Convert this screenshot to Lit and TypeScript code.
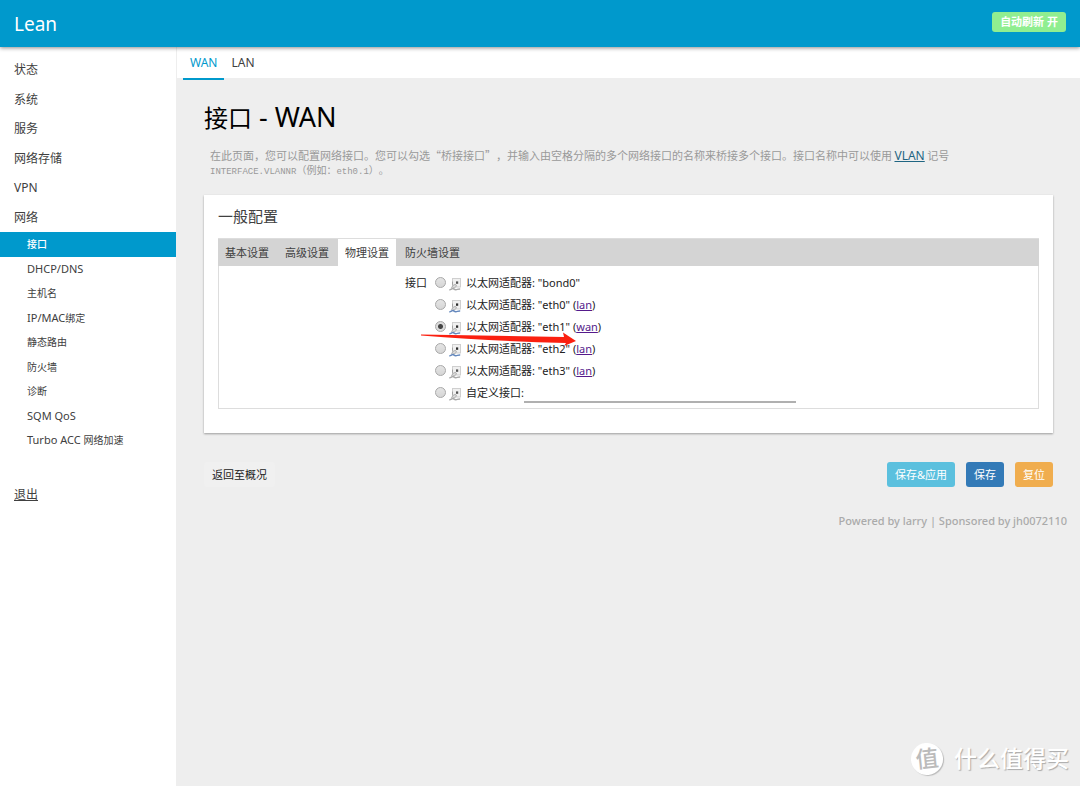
import { LitElement, html, svg, css, nothing } from "lit";
import { customElement, property, state } from "lit/decorators.js";

interface Device {
  id: string;
  label: string;
  net?: string;
  up: boolean;
}

const MENU = ["状态", "系统", "服务", "网络存储", "VPN", "网络"];
const SUBMENU = ["接口", "DHCP/DNS", "主机名", "IP/MAC绑定", "静态路由", "防火墙", "诊断", "SQM QoS", "Turbo ACC 网络加速"];
const TABS = ["基本设置", "高级设置", "物理设置", "防火墙设置"];
const DEVICES: Device[] = [
  { id: "bond0", label: '以太网适配器: "bond0"', up: false },
  { id: "eth0", label: '以太网适配器: "eth0"', net: "lan", up: true },
  { id: "eth1", label: '以太网适配器: "eth1"', net: "wan", up: true },
  { id: "eth2", label: '以太网适配器: "eth2"', net: "lan", up: true },
  { id: "eth3", label: '以太网适配器: "eth3"', net: "lan", up: false },
];

/** Wraps each Latin run so that it can be set slightly larger than the Chinese text. */
const mixed = (text: string) =>
  text.split(/([\x20-\x7e]+)/).filter(Boolean).map((run) =>
    /^[\x20-\x7e]/.test(run) ? html`<span class="latin">${run}</span>` : run);

@customElement("port-icon")
class PortIcon extends LitElement {
  @property({ type: Boolean }) up = false;

  static styles = css`
    :host { display: block; width: 13px; height: 13px; }
    svg { display: block; }
  `;

  render() {
    const cable = this.up ? "#6488bd" : "#a9a9a9";
    return html`<svg width="13" height="13" viewBox="0 0 13 13" aria-hidden="true">
      ${svg`
        <rect x="3.5" y=".5" width="8" height="8.5" fill="#f0f0f0" stroke="#cfcfcf"/>
        <rect x="7" y="3.4" width="2.2" height="2.4" fill="${this.up ? "#2c2c2c" : "#555"}"/>
        <path d="M3.5 3.6v3.2" fill="none" stroke="#a2a2a2"/>
        <path d="M2.6 9.4 4.4 7l2.2-.6.9 1.7-1.9 1.6-2.2.6z" fill="#dcdcdc" stroke="#979797" stroke-width=".7"/>
        <path d="M.3 11.7c1.7.3 2.2-1.3 3.6-1.2 1.3.1 1.2 1.4 3 1.2 1.4-.1 2-.8 4.3-.7" fill="none" stroke="${cable}" stroke-width="1.5"/>
      `}
    </svg>`;
  }
}

@customElement("app-root")
class AppRoot extends LitElement {
  @state() private selected = "eth1";

  static styles = css`
    :host {
      display: flex;
      flex-direction: column;
      min-height: 100vh;
      position: relative;
      background: #eee;
      color: #404040;
      font: 11px/16px "Noto Sans", "Noto Sans CJK SC", sans-serif;
    }
    * { box-sizing: border-box; }
    a { color: inherit; text-decoration: none; }
    ul { list-style: none; margin: 0; padding: 0; }
    button { font: inherit; border: 0; cursor: pointer; }

    .top {
      display: flex;
      align-items: center;
      justify-content: space-between;
      height: 47px;
      padding: 0 14px;
      background: #0099cc;
      box-shadow: 0 1px 4px rgba(0, 0, 0, 0.45);
      z-index: 1;
    }
    .brand { color: #fff; font-size: 19px; line-height: 28px; }
    .refresh {
      height: 20px;
      margin-bottom: 3px;
      padding: 0 8px;
      border-radius: 3px;
      background: #90ee90;
      color: #fff;
      font-weight: 700;
      line-height: 20px;
    }

    .body { display: flex; flex: 1; }
    .side { width: 177px; flex: none; padding-top: 8px; background: #fff; border-right: 1px solid #eee; }
    .menu { display: grid; grid-auto-rows: 30px 29px; font-size: 12px; }
    .menu a { display: block; padding-left: 14px; line-height: 29px; }
    .sub { display: grid; grid-auto-rows: 25px 24px; font-size: 10px; }
    .sub a { display: block; padding-left: 27px; line-height: 24px; height: 100%; }
    .sub .latin { font-size: 11px; }
    .sub .on { background: #0099cc; color: #fff; font-weight: 500; }
    .exit { display: inline-block; margin: 34px 14px; font-size: 12px; line-height: 16px; text-decoration: underline; }

    .main { flex: 1; min-width: 0; }
    .nets { display: flex; height: 31px; padding-left: 6px; background: #fff; font-size: 12px; }
    .nets a { height: 33px; padding: 0 7px; line-height: 31px; }
    .nets .on { color: #0099cc; border-bottom: 2px solid #0099cc; }

    .content { padding: 24px 27px 0; }
    h2 { margin: 0; color: #000; font-size: 24px; font-weight: 400; line-height: 32px; }
    h2 .latin { font-size: 27px; line-height: 24px; }
    .desc {
      margin: 14px 6px 18px;
      color: #999;
      font-family: "Noto Sans CJK SC", sans-serif;
      line-height: 15px;
      text-spacing-trim: space-all;
    }
    .desc p { margin: 0; }
    .desc a { color: #1f6582; font: 12px/12px "Noto Sans", sans-serif; text-decoration: underline; }
    .desc code { display: block; height: 14px; font: 10px/14px "Noto Sans CJK SC", sans-serif; }
    .desc .mono { font: 9px/9px "Liberation Mono", monospace; }

    .card { padding: 9px 14px 24px; background: #fff; box-shadow: 0 1px 2px rgba(0, 0, 0, 0.35); }
    h3 { margin: 0 0 10px; font-size: 15px; font-weight: 400; line-height: 24px; }
    .tabs { display: flex; gap: 2px; height: 28px; background: #d4d4d4; border-top: 1px solid #ddd; }
    .tabs a { padding: 0 7px; line-height: 28px; }
    .tabs .on { background: #fff; }
    .panel {
      display: grid;
      grid-template-columns: 208px 1fr;
      column-gap: 8px;
      padding: 6px 0 4px;
      border: 1px solid #ddd;
      border-top: 0;
      color: #222;
      line-height: 22px;
    }
    .name { text-align: right; }
    .devices { position: relative; }
    .row { display: flex; align-items: center; height: 22px; }
    .row label { display: flex; align-items: center; white-space: pre; }
    .row a { color: #551a8b; text-decoration: underline; }
    .radio {
      appearance: none;
      width: 11px;
      height: 11px;
      margin: 0 3px 2px 0;
      border: 1px solid #a8a8a8;
      border-radius: 50%;
      background: linear-gradient(#e4e4e4, #d6d6d6);
    }
    .radio:checked { background: radial-gradient(circle, #444 2px, #dcdcdc 3px); }
    port-icon { margin: 2px 4px 0 0; }
    .custom {
      width: 272px;
      height: 20px;
      padding: 0;
      border: 0;
      border-bottom: 2px solid #b0b0b0;
      background: transparent;
      font: inherit;
      outline: 0;
    }
    .arrow { position: absolute; left: -15px; top: 57px; pointer-events: none; }

    .actions { display: flex; gap: 11px; margin-top: 29px; }
    .btn { height: 25px; padding: 0 8px; border-radius: 3px; color: #fff; line-height: 25px; }
    .back { margin-right: auto; background: #f0f0f0; color: #222; }
    .apply { background: #5bc0de; }
    .save { background: #337ab7; }
    .reset { background: #f0ad4e; }
    footer { padding: 26px 13px; color: #aaa; font-weight: 500; text-align: right; }

    .mark {
      position: absolute;
      right: 11px;
      bottom: 11px;
      display: flex;
      align-items: center;
      gap: 11px;
      color: #fff;
      font-size: 23px;
      font-weight: 500;
      line-height: 33px;
      text-shadow: 1px 1px 1px #aaa;
    }
    .seal {
      width: 32px;
      height: 32px;
      border-radius: 50%;
      background: #fff;
      box-shadow: 1px 1px 1px #bbb;
      color: #bbb;
      line-height: 31px;
      text-align: center;
      text-shadow: none;
      transform: rotate(-6deg);
    }
  `;

  private radio(id: string) {
    return html`<input class="radio" type="radio" name="device" id=${id}
      .checked=${this.selected === id} @change=${() => (this.selected = id)}>`;
  }

  render() {
    return html`
      <header class="top">
        <a class="brand" href="#">Lean</a>
        <button class="refresh">自动刷新 开</button>
      </header>
      <div class="body">
        <nav class="side">
          <ul class="menu">${MENU.map((m) => html`<li><a href="#">${m}</a></li>`)}</ul>
          <ul class="sub">${SUBMENU.map((m, i) => html`<li><a class=${i === 0 ? "on" : nothing} href="#">${mixed(m)}</a></li>`)}</ul>
          <a class="exit" href="#">退出</a>
        </nav>
        <main class="main">
          <nav class="nets"><a class="on" href="#">WAN</a><a href="#">LAN</a></nav>
          <div class="content">
            <h2>${mixed("接口 - WAN")}</h2>
            <div class="desc">
              <p>在此页面，您可以配置网络接口。您可以勾选“桥接接口”，并输入由空格分隔的多个网络接口的名称来桥接多个接口。接口名称中可以使用 <a href="#">VLAN</a> 记号</p>
              <code><span class="mono">INTERFACE.VLANNR</span>（例如：<span class="mono">eth0.1</span>）。</code>
            </div>
            <section class="card">
              <h3>一般配置</h3>
              <nav class="tabs">${TABS.map((t, i) => html`<a class=${i === 2 ? "on" : nothing} href="#">${t}</a>`)}</nav>
              <div class="panel">
                <div class="name" id="devs">接口</div>
                <div class="devices" role="radiogroup" aria-labelledby="devs">
                  ${DEVICES.map((d) => html`<div class="row">
                    ${this.radio(d.id)}
                    <label for=${d.id}><port-icon ?up=${d.up}></port-icon>${d.label}</label>
                    ${d.net ? html`<span>&nbsp;(<a href="#">${d.net}</a>)</span>` : nothing}
                  </div>`)}
                  <div class="row">
                    ${this.radio("custom")}
                    <label for="custom"><port-icon></port-icon>自定义接口:</label>
                    <input class="custom" type="text" aria-label="自定义接口">
                  </div>
                  <svg class="arrow" width="160" height="22" viewBox="0 0 160 22" aria-hidden="true">
                    <path d="M1 5.5 144 8 143 3.5 156 12 144 17 146 14Q80 12.500 1 6.500z" fill="#fb2010"/>
                  </svg>
                </div>
              </div>
            </section>
            <div class="actions">
              <button class="btn back">返回至概况</button>
              <button class="btn apply">保存&amp;应用</button>
              <button class="btn save">保存</button>
              <button class="btn reset">复位</button>
            </div>
          </div>
          <footer>Powered by larry | Sponsored by jh0072110</footer>
        </main>
      </div>
      <div class="mark"><span class="seal">值</span><span>什么值得买</span></div>
    `;
  }
}
